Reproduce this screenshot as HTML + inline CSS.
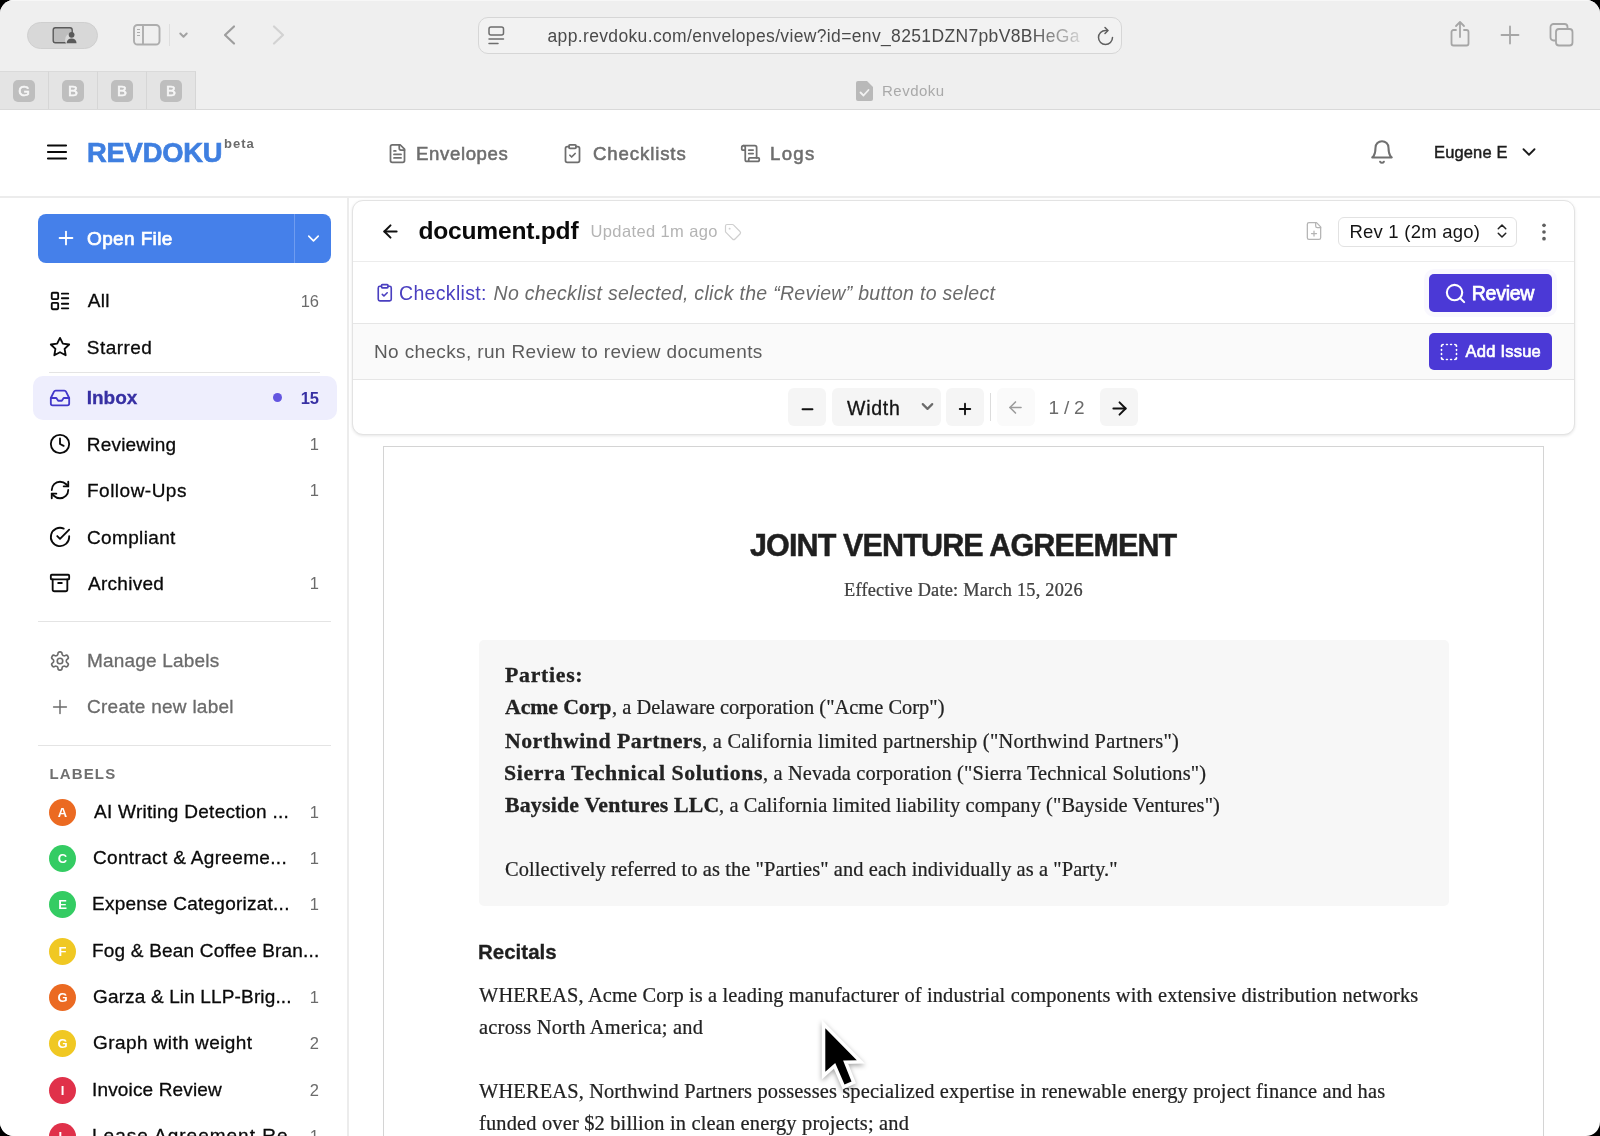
<!DOCTYPE html>
<html><head><meta charset="utf-8"><title>Revdoku</title>
<style>
*{box-sizing:border-box;margin:0;padding:0}
html,body{width:1600px;height:1136px;overflow:hidden;background:#000}
body{font-family:"Liberation Sans",sans-serif;color:#111;position:relative}
#win{will-change:transform;position:absolute;left:0;top:0;width:1600px;height:1136px;background:#fff;border-radius:14px;overflow:hidden}
.abs{position:absolute}
.t{position:absolute;white-space:nowrap;line-height:24px;margin-top:-12px}
svg{position:absolute;overflow:visible}
.lu{fill:none;stroke:currentColor;stroke-width:2;stroke-linecap:round;stroke-linejoin:round}
/* chrome */
#chrome{position:absolute;left:0;top:0;width:1600px;height:110px;background:#efefef;border-bottom:1px solid #d9d9d9;box-shadow:inset 0 1px 0 #f7f7f7}
.ptab{position:absolute;top:71px;height:38px;width:49px;background:#e4e4e4;border-right:1px solid #d6d6d6;border-top:1px solid #dadada}
.fav{position:absolute;left:13px;top:8px;width:22px;height:22px;border-radius:5px;background:#bebebe;color:#f6f6f6;font-size:15px;-webkit-text-stroke:.6px #f6f6f6;line-height:22px;text-align:center}
/* app */
#hdr{position:absolute;left:0;top:110px;width:1600px;height:88px;background:#fff;border-bottom:2px solid #ececec}
#side{position:absolute;left:0;top:198px;width:349px;height:938px;background:#fff;border-right:2px solid #ececec}
.nav{color:#6e6e6e;font-size:18.600px;-webkit-text-stroke:.55px #6e6e6e}
.si{font-size:19px;color:#0a0a0a;-webkit-text-stroke:.3px currentColor}
.cnt{position:absolute;white-space:nowrap;line-height:24px;margin-top:-12px;font-size:16.5px;color:#6b6b6b;text-align:right;width:40px;left:279px}
.hr{position:absolute;height:1px;background:#e4e4e4}
.dot{position:absolute;left:49px;width:27px;height:27px;border-radius:50%;color:#fff;font-weight:bold;font-size:13px;line-height:27px;text-align:center;margin-top:-13.500px}
/* card */
#card{position:absolute;left:352px;top:200px;width:1223px;height:235px;background:#fff;border:1px solid #e3e3e3;border-radius:11px;box-shadow:0 1px 3px rgba(0,0,0,.10);overflow:hidden}
.tb{position:absolute;top:388px;height:38px;background:#f5f5f5;border-radius:6px}
/* doc */
#doc{position:absolute;left:383px;top:446px;width:1161px;height:700px;background:#fff;border:1px solid #d4d4d4}
.dt{font-family:"Liberation Serif",serif;font-size:20.4px;color:#222;-webkit-text-stroke:.22px #222}
.dt b{font-size:21.800px;-webkit-text-stroke:.3px #222}
</style></head><body><div id="win">

<!-- ===== Safari chrome ===== -->
<div id="chrome"></div>
<div class="abs" style="left:27px;top:22px;width:71px;height:27px;border-radius:14px;background:#d8d8d8;border:1px solid #cfcfcf"></div>
<div class="abs" style="left:478px;top:17px;width:644px;height:37px;border-radius:10px;background:#f2f2f2;border:1px solid #d6d6d6"></div>
<span class="t" id="url" style="left:547.500px;top:36px;font-size:17.500px;color:#4a4a4a;letter-spacing:.350px">app.revdoku.com/envelopes/view?id=env_8251DZN7pbV8BHeGa</span>
<div class="abs" style="left:1030px;top:22px;width:56px;height:28px;background:linear-gradient(90deg,rgba(242,242,242,0),rgba(242,242,242,.92))"></div>
<!--CHROME-START-->
<!-- profile icon in pill -->
<svg style="left:51.700px;top:26.200px" width="28" height="20" viewBox="0 0 28 20"><rect x="1.200" y="1.700" width="19" height="15" rx="2.200" fill="#bdbdbd" stroke="#5a5a5a" stroke-width="1.400"/><circle cx="20" cy="14" r="7" fill="#d8d8d8"/><circle cx="19.6" cy="8.8" r="2.9" fill="#5a5a5a"/><path d="M14.6 17.2c.3-3.2 2.4-4.6 5-4.6s4.7 1.400 5 4.600z" fill="#5a5a5a"/></svg>
<!-- sidebar toggle -->
<svg style="left:133px;top:24px" width="28" height="22" viewBox="0 0 28 22" fill="none" stroke="#adadad" stroke-width="1.900"><rect x="1" y="1" width="25.500" height="19.500" rx="3.500"/><path d="M10 1v19.500"/><path d="M4 5.500h3M4 8.500h3M4 11.500h3" stroke-width="1.200"/></svg>
<div class="abs" style="left:169px;top:24px;width:1px;height:22px;background:#dedede"></div>
<svg style="left:178px;top:30px" width="11" height="10" viewBox="0 0 11 10" fill="none" stroke="#a2a2a2" stroke-width="2" stroke-linecap="round" stroke-linejoin="round"><path d="M2.300 3.500l3.200 3.200 3.200-3.200"/></svg>
<svg style="left:222px;top:24px" width="16" height="22" viewBox="0 0 16 22" fill="none" stroke="#9e9e9e" stroke-width="2.200" stroke-linecap="round" stroke-linejoin="round"><path d="M12 2.500l-9 8.500 9 8.500"/></svg>
<svg style="left:270px;top:24px" width="16" height="22" viewBox="0 0 16 22" fill="none" stroke="#d2d2d2" stroke-width="2.200" stroke-linecap="round" stroke-linejoin="round"><path d="M4 2.500l9 8.500-9 8.500"/></svg>
<!-- reader/page icon in url bar -->
<svg style="left:488px;top:26px" width="18" height="20" viewBox="0 0 18 20" fill="none" stroke="#6e6e6e" stroke-width="1.500" stroke-linecap="round"><rect x="1" y="1" width="14.500" height="8" rx="2"/><path d="M1 13h14.500M1 17.500h9"/></svg>
<!-- reload -->
<svg style="left:1096px;top:26px" width="19" height="21" viewBox="0 0 19 21" fill="none" stroke="#5f5f5f" stroke-width="1.500" stroke-linecap="round" stroke-linejoin="round"><path d="M16.500 11.500a7 7 0 1 1-7-7h2"/><path d="M9 1.500l3 3-3 3"/></svg>
<!-- share -->
<svg style="left:1449px;top:20px" width="22" height="28" viewBox="0 0 22 28" fill="none" stroke="#a6a6a6" stroke-width="1.800" stroke-linecap="round" stroke-linejoin="round"><path d="M7 10H4.500a2 2 0 0 0-2 2v11.500a2 2 0 0 0 2 2h13a2 2 0 0 0 2-2V12a2 2 0 0 0-2-2H15"/><path d="M11 17V2.500M7 6l4-4 4 4"/></svg>
<!-- plus -->
<svg style="left:1499px;top:24px" width="22" height="22" viewBox="0 0 22 22" fill="none" stroke="#a6a6a6" stroke-width="1.800" stroke-linecap="round"><path d="M11 2.500v17M2.500 11h17"/></svg>
<!-- tabs -->
<svg style="left:1548px;top:22px" width="27" height="25" viewBox="0 0 27 25" fill="none" stroke="#a6a6a6" stroke-width="1.800" stroke-linejoin="round"><rect x="8" y="7" width="16.500" height="16.500" rx="3" fill="#efefef"/><path d="M8 18.500H5.500a3 3 0 0 1-3-3V5a3 3 0 0 1 3-3h11a3 3 0 0 1 3 3v2"/></svg>
<!-- tab favicon -->
<svg style="left:855px;top:80px" width="19" height="22" viewBox="0 0 19 22"><path d="M3 1h9l6 6v12a2 2 0 0 1-2 2H3a2 2 0 0 1-2-2V3a2 2 0 0 1 2-2z" fill="#b9b9b9"/><path d="M5.500 12.500l3 3 5-5.500" fill="none" stroke="#f2f2f2" stroke-width="1.800" stroke-linecap="round" stroke-linejoin="round"/></svg>
<!--CHROME-END-->
<div class="ptab" style="left:0"><div class="fav">G</div></div>
<div class="ptab" style="left:49px"><div class="fav">B</div></div>
<div class="ptab" style="left:98px"><div class="fav">B</div></div>
<div class="ptab" style="left:147px"><div class="fav">B</div></div>
<span class="t" id="tabt" style="left:882.00px;top:91px;font-size:15px;color:#a9a9a9;letter-spacing:0.500px">Revdoku</span>

<!-- ===== App header ===== -->
<div id="hdr"></div>
<span class="t" id="logo" style="left:87.00px;top:153px;font-size:27.3px;font-weight:bold;color:#3f7fe0;-webkit-text-stroke:.7px #3f7fe0;line-height:34px;margin-top:-17px;letter-spacing:-0.167px">REVDOKU</span>
<span class="t" id="beta" style="left:224.00px;top:144px;font-size:13px;font-weight:bold;color:#6b6b6b;letter-spacing:1.000px">beta</span>
<span class="t nav" id="n1" style="left:416.00px;top:154px;letter-spacing:0.625px">Envelopes</span>
<span class="t nav" id="n2" style="left:593.00px;top:154px;letter-spacing:0.889px">Checklists</span>
<span class="t nav" id="n3" style="left:770.00px;top:154px;letter-spacing:1.333px">Logs</span>
<span class="t" id="user" style="left:1434.00px;top:152px;font-size:16.5px;color:#1c1c1c;-webkit-text-stroke:.45px #1c1c1c;letter-spacing:0.143px">Eugene E</span>
<!--HDR-START-->
<svg class="lu" style="left:45px;top:140px;color:#0a0a0a;stroke-width:2.2" width="24" height="24" viewBox="0 0 24 24"><path d="M3 12h18M3 5.500h18M3 18.500h18"/></svg>
<svg class="lu" style="left:387px;top:143px;color:#6e6e6e;stroke-width:2" width="21" height="21" viewBox="0 0 24 24"><path d="M15 2H6a2 2 0 0 0-2 2v16a2 2 0 0 0 2 2h12a2 2 0 0 0 2-2V7Z"/><path d="M14 2v4a2 2 0 0 0 2 2h4"/><path d="M10 9H8"/><path d="M16 13H8"/><path d="M16 17H8"/></svg>
<svg class="lu" style="left:562px;top:143px;color:#6e6e6e;stroke-width:2" width="21" height="21" viewBox="0 0 24 24"><rect width="8" height="4" x="8" y="2" rx="1" ry="1"/><path d="M16 4h2a2 2 0 0 1 2 2v14a2 2 0 0 1-2 2H6a2 2 0 0 1-2-2V6a2 2 0 0 1 2-2h2"/><path d="m9 14 2 2 4-4"/></svg>
<svg class="lu" style="left:740px;top:143px;color:#6e6e6e;stroke-width:2" width="21" height="21" viewBox="0 0 24 24"><path d="M15 12h-5"/><path d="M15 8h-5"/><path d="M19 17V5a2 2 0 0 0-2-2H4"/><path d="M8 21h12a2 2 0 0 0 2-2v-1a1 1 0 0 0-1-1H11a1 1 0 0 0-1 1v1a2 2 0 1 1-4 0V5a2 2 0 1 0-4 0v2a1 1 0 0 0 1 1h3"/></svg>
<svg class="lu" style="left:1369px;top:139px;color:#707070;stroke-width:1.900" width="26" height="26" viewBox="0 0 24 24"><path d="M6 8a6 6 0 0 1 12 0c0 7 3 9 3 9H3s3-2 3-9"/><path d="M10.300 21a1.940 1.940 0 0 0 3.400 0"/></svg>
<svg class="lu" style="left:1518px;top:141px;color:#1c1c1c;stroke-width:2" width="22" height="22" viewBox="0 0 24 24"><path d="m6 9 6 6 6-6"/></svg>
<!--HDR-END-->

<!-- ===== Sidebar ===== -->
<div id="side"></div>
<div class="abs" style="left:38px;top:214px;width:293px;height:49px;border-radius:8px;background:#4580ea"></div>
<div class="abs" style="left:294px;top:214px;width:1px;height:49px;background:#6f9cf0"></div>
<span class="t" id="open" style="left:87.00px;top:239px;font-size:19px;-webkit-text-stroke:.7px #fff;color:#fff;letter-spacing:0.375px">Open File</span>
<!--SIDE-START-->
<svg class="lu" style="left:54.600px;top:227.400px;color:#fff" width="22" height="22" viewBox="0 0 24 24"><path d="M5 12h14"/><path d="M12 5v14"/></svg>
<svg class="lu" style="left:303.600px;top:229px;color:#fff" width="19" height="19" viewBox="0 0 24 24"><path d="m6 9 6 6 6-6"/></svg>

<svg class="lu" style="left:49px;top:290px;color:#0a0a0a" width="22" height="22" viewBox="0 0 24 24"><rect width="7" height="7" x="3" y="3" rx="1"/><rect width="7" height="7" x="3" y="14" rx="1"/><path d="M14 4h7"/><path d="M14 9h7"/><path d="M14 15h7"/><path d="M14 20h7"/></svg>
<span class="t si" id="s1" style="left:87.80px;top:301px;letter-spacing:0.300px">All</span><span class="cnt" style="top:301px">16</span>
<svg class="lu" style="left:49px;top:336px;color:#0a0a0a" width="22" height="22" viewBox="0 0 24 24"><polygon points="12 2 15.09 8.26 22 9.27 17 14.14 18.18 21.02 12 17.77 5.82 21.02 7 14.14 2 9.27 8.91 8.26 12 2"/></svg>
<span class="t si" id="s2" style="left:86.80px;top:347.700px;letter-spacing:0.467px">Starred</span>
<div class="hr" style="left:49px;top:372px;width:271px"></div>
<div class="abs" style="left:33px;top:376px;width:303.500px;height:44px;border-radius:10px;background:#eeeefd"></div>
<svg class="lu" style="left:49px;top:386.500px;color:#4338ca" width="22" height="22" viewBox="0 0 24 24"><polyline points="22 12 16 12 14 15 10 15 8 12 2 12"/><path d="M5.45 5.11 2 12v6a2 2 0 0 0 2 2h16a2 2 0 0 0 2-2v-6l-3.45-6.89A2 2 0 0 0 16.76 4H7.24a2 2 0 0 0-1.79 1.11z"/></svg>
<span class="t si" id="s3" style="left:86.80px;top:397.800px;font-weight:bold;color:#3730a3;letter-spacing:-0.050px">Inbox</span>
<div class="abs" style="left:273px;top:393px;width:9px;height:9px;border-radius:50%;background:#6355e0"></div>
<span class="cnt" style="top:397.800px;font-weight:bold;color:#3730a3">15</span>
<svg class="lu" style="left:49px;top:433px;color:#0a0a0a" width="22" height="22" viewBox="0 0 24 24"><circle cx="12" cy="12" r="10"/><polyline points="12 6 12 12 16 14"/></svg>
<span class="t si" id="s4" style="left:86.80px;top:444.600px;letter-spacing:0.200px">Reviewing</span><span class="cnt" style="top:444px">1</span>
<svg class="lu" style="left:49px;top:479px;color:#0a0a0a" width="22" height="22" viewBox="0 0 24 24"><path d="M3 12a9 9 0 0 1 9-9 9.75 9.75 0 0 1 6.74 2.74L21 8"/><path d="M21 3v5h-5"/><path d="M21 12a9 9 0 0 1-9 9 9.75 9.75 0 0 1-6.74-2.74L3 16"/><path d="M8 16H3v5"/></svg>
<span class="t si" id="s5" style="left:87.00px;top:490.500px;letter-spacing:0.489px">Follow-Ups</span><span class="cnt" style="top:490px">1</span>
<svg class="lu" style="left:49px;top:526px;color:#0a0a0a" width="22" height="22" viewBox="0 0 24 24"><path d="M22 11.08V12a10 10 0 1 1-5.93-9.14"/><path d="m9 11 3 3L22 4"/></svg>
<span class="t si" id="s6" style="left:87.00px;top:537.500px;letter-spacing:0.350px">Compliant</span>
<svg class="lu" style="left:49px;top:572px;color:#0a0a0a" width="22" height="22" viewBox="0 0 24 24"><rect width="20" height="5" x="2" y="3" rx="1"/><path d="M4 8v11a2 2 0 0 0 2 2h12a2 2 0 0 0 2-2V8"/><path d="M10 12h4"/></svg>
<span class="t si" id="s7" style="left:88.00px;top:583.500px;letter-spacing:0.286px">Archived</span><span class="cnt" style="top:583px">1</span>
<div class="hr" style="left:38px;top:621px;width:293px"></div>
<svg class="lu" style="left:49px;top:650px;color:#6b6b6b;stroke-width:1.8" width="22" height="22" viewBox="0 0 24 24"><path d="M12.22 2h-.44a2 2 0 0 0-2 2v.18a2 2 0 0 1-1 1.73l-.43.25a2 2 0 0 1-2 0l-.15-.08a2 2 0 0 0-2.73.73l-.22.38a2 2 0 0 0 .73 2.73l.15.1a2 2 0 0 1 1 1.72v.51a2 2 0 0 1-1 1.74l-.15.09a2 2 0 0 0-.73 2.73l.22.38a2 2 0 0 0 2.73.73l.15-.08a2 2 0 0 1 2 0l.43.25a2 2 0 0 1 1 1.73V20a2 2 0 0 0 2 2h.44a2 2 0 0 0 2-2v-.18a2 2 0 0 1 1-1.73l.43-.25a2 2 0 0 1 2 0l.15.08a2 2 0 0 0 2.73-.73l.22-.39a2 2 0 0 0-.73-2.73l-.15-.08a2 2 0 0 1-1-1.74v-.5a2 2 0 0 1 1-1.74l.15-.09a2 2 0 0 0 .73-2.73l-.22-.38a2 2 0 0 0-2.73-.73l-.15.08a2 2 0 0 1-2 0l-.43-.25a2 2 0 0 1-1-1.73V4a2 2 0 0 0-2-2z"/><circle cx="12" cy="12" r="3"/></svg>
<span class="t si" id="s8" style="left:87.00px;top:661px;color:#6b6b6b;letter-spacing:0.183px">Manage Labels</span>
<svg class="lu" style="left:49px;top:696px;color:#6b6b6b;stroke-width:1.6" width="22" height="22" viewBox="0 0 24 24"><path d="M5 12h14"/><path d="M12 5v14"/></svg>
<span class="t si" id="s9" style="left:87.00px;top:707px;color:#6b6b6b;letter-spacing:0.267px">Create new label</span>
<div class="hr" style="left:38px;top:745px;width:293px"></div>
<span class="t" id="lab" style="left:49.40px;top:774px;font-size:15px;font-weight:bold;color:#6f6f6f;letter-spacing:1.160px">LABELS</span>

<div class="dot" style="top:812px;background:#eb6a22">A</div><span class="t si" id="l1" style="left:94.00px;top:812px;letter-spacing:0.270px">AI Writing Detection ...</span><span class="cnt" style="top:812px">1</span>
<div class="dot" style="top:858px;background:#34cc63">C</div><span class="t si" id="l2" style="left:93.00px;top:858px;letter-spacing:0.340px">Contract &amp; Agreeme...</span><span class="cnt" style="top:858px">1</span>
<div class="dot" style="top:904px;background:#34cc63">E</div><span class="t si" id="l3" style="left:92.00px;top:904px;letter-spacing:0.248px">Expense Categorizat...</span><span class="cnt" style="top:904px">1</span>
<div class="dot" style="top:951px;background:#f0c823">F</div><span class="t si" id="l4" style="left:92.00px;top:951px;letter-spacing:0.200px">Fog &amp; Bean Coffee Bran...</span>
<div class="dot" style="top:997px;background:#eb6a22">G</div><span class="t si" id="l5" style="left:93.00px;top:997px;letter-spacing:0.145px">Garza &amp; Lin LLP-Brig...</span><span class="cnt" style="top:997px">1</span>
<div class="dot" style="top:1043px;background:#f0c823">G</div><span class="t si" id="l6" style="left:93.00px;top:1043px;letter-spacing:0.438px">Graph with weight</span><span class="cnt" style="top:1043px">2</span>
<div class="dot" style="top:1090px;background:#e0314a">I</div><span class="t si" id="l7" style="left:92.00px;top:1090px;letter-spacing:0.154px">Invoice Review</span><span class="cnt" style="top:1090px">2</span>
<div class="dot" style="top:1136px;background:#e0314a">L</div><span class="t si" id="l8" style="left:92.00px;top:1136px;letter-spacing:1.000px">Lease Agreement Re...</span><span class="cnt" style="top:1136px">1</span>
<!--SIDE-END-->

<!-- ===== Card ===== -->
<div id="card">
  <div class="abs" style="left:0;top:60px;width:1223px;height:1px;background:#ececec"></div>
  <div class="abs" style="left:0;top:122px;width:1223px;height:57px;background:#fafafa;border-top:1px solid #e6e6e6;border-bottom:1px solid #e6e6e6"></div>
</div>
<!--CARD-START-->
<svg class="lu" style="left:380px;top:221px;color:#111;stroke-width:2.300" width="21" height="21" viewBox="0 0 24 24"><path d="m12 19-7-7 7-7"/><path d="M19 12H5"/></svg>
<span class="t" id="ttl" style="left:418.50px;top:231px;font-size:24.600px;font-weight:bold;color:#0a0a0a;line-height:32px;margin-top:-16px;letter-spacing:-0.227px">document.pdf</span>
<span class="t" id="upd" style="left:590.50px;top:231px;font-size:16.5px;color:#b4b4b4;letter-spacing:0.385px">Updated 1m ago</span>
<svg class="lu" style="left:724px;top:223px;color:#cfcfcf;stroke-width:1.6" width="18" height="18" viewBox="0 0 24 24"><path d="M12.586 2.586A2 2 0 0 0 11.172 2H4a2 2 0 0 0-2 2v7.172a2 2 0 0 0 .586 1.414l8.704 8.704a2.426 2.426 0 0 0 3.42 0l6.58-6.58a2.426 2.426 0 0 0 0-3.42z"/><circle cx="7.5" cy="7.5" r=".5" fill="currentColor"/></svg>
<svg class="lu" style="left:1304.400px;top:221.200px;color:#b4b4b4;stroke-width:1.500" width="20" height="20" viewBox="0 0 24 24"><path d="M15 2H6a2 2 0 0 0-2 2v16a2 2 0 0 0 2 2h12a2 2 0 0 0 2-2V7Z"/><path d="M14 2v4a2 2 0 0 0 2 2h4"/><path d="M9 15h6"/><path d="M12 18v-6"/></svg>
<div class="abs" style="left:1337.500px;top:216.500px;width:179px;height:30px;border-radius:6px;background:#fff;border:1px solid #e2e2e2"></div>
<span class="t" id="rev" style="left:1349.40px;top:232px;font-size:18.500px;color:#141414;letter-spacing:0.231px">Rev 1 (2m ago)</span>
<svg class="lu" style="left:1493px;top:222px;color:#222" width="18" height="18" viewBox="0 0 24 24"><path d="m7 15 5 5 5-5"/><path d="m7 9 5-5 5 5"/></svg>
<svg style="left:1534px;top:222px;color:#5f5f5f" width="20" height="20" viewBox="0 0 24 24" fill="currentColor"><circle cx="12" cy="12" r="2.200"/><circle cx="12" cy="4" r="2.200"/><circle cx="12" cy="20" r="2.200"/></svg>

<svg class="lu" style="left:374.500px;top:283.100px;color:#4a3fc0;stroke-width:2" width="19.500" height="19.500" viewBox="0 0 24 24"><rect width="8" height="4" x="8" y="2" rx="1" ry="1"/><path d="M16 4h2a2 2 0 0 1 2 2v14a2 2 0 0 1-2 2H6a2 2 0 0 1-2-2V6a2 2 0 0 1 2-2h2"/><path d="m9 14 2 2 4-4"/></svg>
<span class="t" id="ckl" style="left:399.00px;top:293px;font-size:19.5px;color:#4a3fc0;letter-spacing:0.333px">Checklist:</span>
<span class="t" id="ckt" style="left:493.50px;top:293px;font-size:19.5px;color:#6a6a6a;font-style:italic;letter-spacing:0.298px">No checklist selected, click the “Review” button to select</span>
<div class="abs" style="left:1428.500px;top:274px;width:123.500px;height:38px;border-radius:5px;background:#4b39d6;box-shadow:0 0 0 5px rgba(75,57,214,.035)"></div>
<svg class="lu" style="left:1444px;top:281.500px;color:#fff;stroke-width:2.200" width="23" height="23" viewBox="0 0 24 24"><circle cx="11" cy="11" r="8"/><path d="m21 21-4.3-4.3"/></svg>
<span class="t" id="rvw" style="left:1471.80px;top:293px;font-size:19.500px;-webkit-text-stroke:.75px #fff;color:#fff;letter-spacing:-0.260px">Review</span>

<span class="t" id="noc" style="left:374.00px;top:352px;font-size:19px;color:#5c5c5c;letter-spacing:0.362px">No checks, run Review to review documents</span>
<div class="abs" style="left:1429px;top:332.500px;width:123px;height:37.500px;border-radius:5px;background:#4b39d6"></div>
<svg class="lu" style="left:1439px;top:341.500px;color:#fff;stroke-width:2" width="20" height="20" viewBox="0 0 24 24"><path d="M5 3a2 2 0 0 0-2 2"/><path d="M19 3a2 2 0 0 1 2 2"/><path d="M21 19a2 2 0 0 1-2 2"/><path d="M5 21a2 2 0 0 1-2-2"/><path d="M9 3h1"/><path d="M9 21h1"/><path d="M14 3h1"/><path d="M14 21h1"/><path d="M3 9v1"/><path d="M21 9v1"/><path d="M3 14v1"/><path d="M21 14v1"/></svg>
<span class="t" id="add" style="left:1465.50px;top:351px;font-size:16.500px;-webkit-text-stroke:.65px #fff;color:#fff;letter-spacing:0.238px">Add Issue</span>

<div class="tb" style="left:788px;width:38px"></div>
<div class="tb" style="left:832px;width:109px"></div>
<div class="tb" style="left:946px;width:38px"></div>
<div class="abs" style="left:990px;top:393px;width:1px;height:28px;background:#dcdcdc"></div>
<div class="tb" style="left:997px;width:38px;background:#fafafa"></div>
<div class="tb" style="left:1100px;width:38px"></div>
<svg class="lu" style="left:798.500px;top:399.500px;color:#111;stroke-width:2.700" width="17" height="17" viewBox="0 0 24 24"><path d="M5 13h14"/></svg>
<span class="t" id="wid" style="left:847.00px;top:408px;font-size:19.500px;color:#141414;-webkit-text-stroke:.3px #141414;letter-spacing:0.750px">Width</span>
<svg class="lu" style="left:917.500px;top:397px;color:#6a6a6a;stroke-width:2.700" width="19" height="19" viewBox="0 0 24 24"><path d="m6 9 6 6 6-6"/></svg>
<svg class="lu" style="left:956px;top:400px;color:#111;stroke-width:2.500" width="18" height="18" viewBox="0 0 24 24"><path d="M5 12h14"/><path d="M12 5v14"/></svg>
<svg class="lu" style="left:1006px;top:398px;color:#9c9c9c;stroke-width:2" width="19" height="19" viewBox="0 0 24 24"><path d="m12 19-7-7 7-7"/><path d="M19 12H5"/></svg>
<span class="t" id="pg" style="left:1048.60px;top:408px;font-size:19px;color:#6b6b6b;letter-spacing:-0.250px">1 / 2</span>
<svg class="lu" style="left:1108.500px;top:397.500px;color:#111;stroke-width:2.200" width="21" height="21" viewBox="0 0 24 24"><path d="M5 12h14"/><path d="m12 5 7 7-7 7"/></svg>
<!--CARD-END-->

<!-- ===== Document ===== -->
<div id="doc"></div>
<!--DOC-START-->
<span class="t" id="dtitle" style="left:750.00px;top:545px;font-size:30.500px;font-weight:bold;color:#1f1f1f;-webkit-text-stroke:.5px #1f1f1f;line-height:36px;margin-top:-18px;letter-spacing:-0.864px">JOINT VENTURE AGREEMENT</span>
<span class="t dt" id="deff" style="left:844.00px;top:590px;font-size:18.3px;color:#444;letter-spacing:0.241px">Effective Date: March 15, 2026</span>
<div class="abs" style="left:479px;top:640px;width:970px;height:266px;background:#f7f7f7;border-radius:5px"></div>
<span class="t dt" id="p0" style="left:505.00px;top:675px;letter-spacing:0.714px"><b>Parties:</b></span>
<span class="t dt" id="p1b" style="left:505.00px;top:707px;letter-spacing:-0.100px"><b>Acme Corp</b></span><span class="t dt" id="p1r" style="left:612.00px;top:707px;letter-spacing:0.027px">, a Delaware corporation ("Acme Corp")</span>
<span class="t dt" id="p2b" style="left:505.00px;top:741px;letter-spacing:0.482px"><b>Northwind Partners</b></span><span class="t dt" id="p2r" style="left:702.00px;top:741px;letter-spacing:0.259px">, a California limited partnership ("Northwind Partners")</span>
<span class="t dt" id="p3b" style="left:504.00px;top:773px;letter-spacing:0.600px"><b>Sierra Technical Solutions</b></span><span class="t dt" id="p3r" style="left:763.00px;top:773px;letter-spacing:0.144px">, a Nevada corporation ("Sierra Technical Solutions")</span>
<span class="t dt" id="p4b" style="left:505.00px;top:805px;letter-spacing:0.211px"><b>Bayside Ventures LLC</b></span><span class="t dt" id="p4r" style="left:719.00px;top:805px;letter-spacing:0.092px">, a California limited liability company ("Bayside Ventures")</span>
<span class="t dt" id="p5" style="left:505.00px;top:869px;letter-spacing:0.099px">Collectively referred to as the "Parties" and each individually as a "Party."</span>
<span class="t" id="rec" style="left:478.00px;top:952px;font-size:20.500px;font-weight:bold;color:#1f1f1f;-webkit-text-stroke:.3px #1f1f1f;letter-spacing:0.000px">Recitals</span>
<span class="t dt" id="r1" style="left:479.00px;top:995px;letter-spacing:0.143px">WHEREAS, Acme Corp is a leading manufacturer of industrial components with extensive distribution networks</span>
<span class="t dt" id="r2" style="left:479.00px;top:1027px;letter-spacing:0.250px">across North America; and</span>
<span class="t dt" id="r3" style="left:479.00px;top:1091px;letter-spacing:0.155px">WHEREAS, Northwind Partners possesses specialized expertise in renewable energy project finance and has</span>
<span class="t dt" id="r4" style="left:479.00px;top:1123px;letter-spacing:0.176px">funded over $2 billion in clean energy projects; and</span>
<!--DOC-END-->

<!--CURSOR-START-->
<svg style="left:810px;top:1010px;filter:drop-shadow(0 2px 2.500px rgba(0,0,0,.35))" width="70" height="90" viewBox="0 0 70 90"><path d="M15.300 18.300V61.700L25.200 52.900 34.500 74.500 41.500 71.400 33.100 50.600 46.800 50.300z" fill="#000" stroke="#fff" stroke-width="7" stroke-linejoin="miter" stroke-miterlimit="6" paint-order="stroke"/></svg>
<!--CURSOR-END-->
</div></body></html>
